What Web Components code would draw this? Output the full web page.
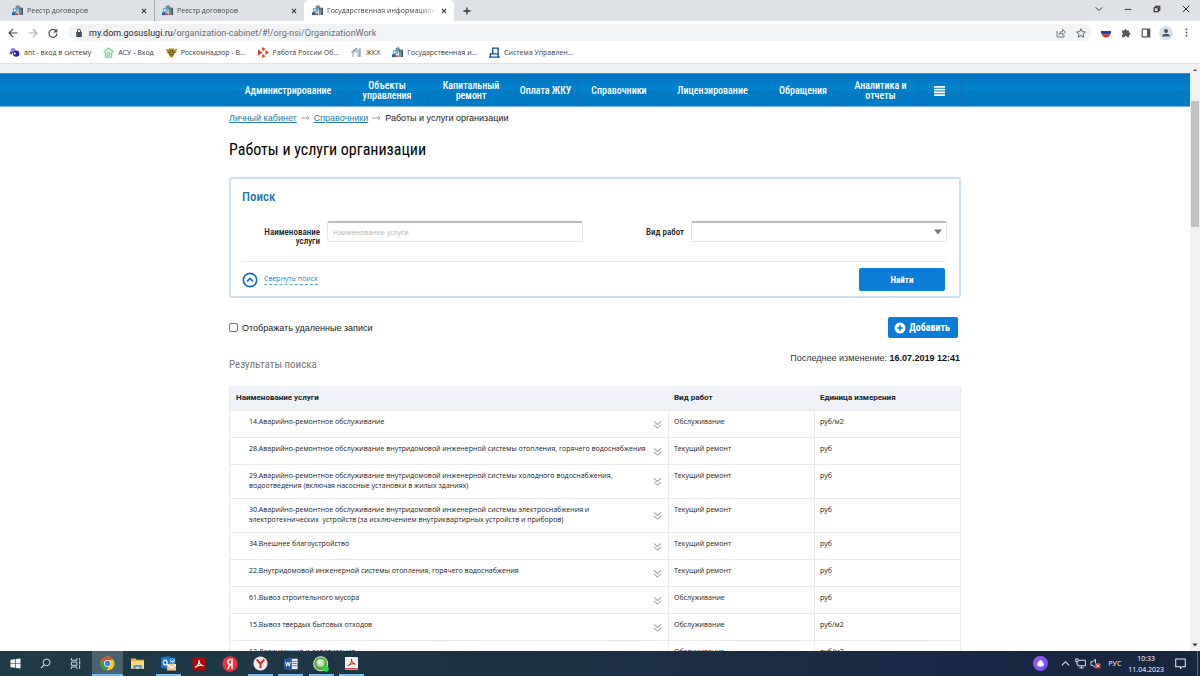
<!DOCTYPE html>
<html lang="ru">
<head>
<meta charset="utf-8">
<meta name="viewport" content="width=device-width, initial-scale=1">
<title>Государственная информационная система</title>
<style>
  html, body { margin: 0; height: 100%; }
  body {
    --ui: "Open Sans", "Noto Sans", sans-serif;
    --body: "Liberation Sans", Arial, sans-serif;
    --small: Roboto, "Liberation Sans", sans-serif;
    --cond: "Roboto Condensed", "Liberation Sans Narrow", Roboto, sans-serif;
    font-family: var(--body);
    color: #222;
  }
</style>
</head>
<body>
<desktop-screen>
  <tab-strip slot="chrome">
    <browser-tab>Реестр договоров</browser-tab>
    <browser-tab divided>Реестр договоров</browser-tab>
    <browser-tab active>Государственная информационная система</browser-tab>
  </tab-strip>
  <address-bar slot="chrome" host="my.dom.gosuslugi.ru" path="/organization-cabinet/#!/org-nsi/OrganizationWork"></address-bar>
  <bookmark-bar slot="chrome">
    <bookmark-link icon="ant">ant - вход в систему</bookmark-link>
    <bookmark-link icon="greenhome">АСУ - Вход</bookmark-link>
    <bookmark-link icon="eagle">Роскомнадзор - В...</bookmark-link>
    <bookmark-link icon="work">Работа России Об...</bookmark-link>
    <bookmark-link icon="house">ЖКХ</bookmark-link>
    <bookmark-link icon="gis">Государственная и...</bookmark-link>
    <bookmark-link icon="system">Система Управлен...</bookmark-link>
  </bookmark-bar>
  <page-view>
    <site-nav></site-nav>
    <page-body>
      <bread-crumbs></bread-crumbs>
      <page-title>Работы и услуги организации</page-title>
      <search-panel></search-panel>
      <list-tools></list-tools>
      <results-table></results-table>
    </page-body>
  </page-view>
  <task-bar slot="taskbar"></task-bar>
</desktop-screen>

<script>
const ICONS = {
  gis: ['0 0 12 12', '<path fill="#7b8a96" d="M4 1l4-1v3h3v8H9V5H4z"/><path fill="#39505f" d="M8 2h1v9H8zM10.500 3H12v8h-1.500z"/><path fill="#5aa9d6" d="M1 3.500h6v4.500H1z"/><path fill="#fff" d="M2 5h2v1.500H2zM5 6h1v1H5z"/><path fill="#1f5f9c" d="M0 8h4v3H0z"/><path fill="#d5442b" d="M4 9h3v2H4z"/>'],
  close: ['0 0 10 10', '<path stroke="#333" stroke-width="1.800" fill="none" d="M1.500 1.500l7 7M8.500 1.500l-7 7"/>'],
  plus: ['0 0 10 10', '<path stroke="#333" stroke-width="1.700" fill="none" d="M5 0.500v9M0.500 5h9"/>'],
  chevdown: ['0 0 10 10', '<path stroke="#333" stroke-width="1.200" fill="none" d="M1 3l4 4 4-4"/>'],
  minimize: ['0 0 10 10', '<path stroke="#333" stroke-width="1.200" d="M1 5.500h8"/>'],
  restore: ['0 0 10 10', '<path stroke="#222" stroke-width="1.400" fill="none" d="M1.500 3.500h5v5h-5zM3.500 3V1.500h5v5H7"/>'],
  winclose: ['0 0 10 10', '<path stroke="#222" stroke-width="1.200" fill="none" d="M1 1l8 8M9 1l-8 8"/>'],
  back: ['0 0 10 10', '<path stroke="#4a4d51" stroke-width="1.100" fill="none" d="M9.500 5H1M5 1L1 5l4 4"/>'],
  forward: ['0 0 10 10', '<path stroke="#b0b3b7" stroke-width="1.100" fill="none" d="M0.500 5H9M5 1l4 4-4 4"/>'],
  reload: ['0 0 10 10', '<path stroke="#4a4d51" stroke-width="1.200" fill="none" d="M8.300 3A4 4 0 1 0 9 5.600"/><path fill="#4a4d51" d="M9.300 0.500v4h-4z"/>'],
  lock: ['0 0 8 10', '<path fill="#4a4d51" d="M1.200 4h5.600v5H1.200z"/><path stroke="#4a4d51" fill="none" d="M2.500 4V2.700a1.500 1.500 0 0 1 3 0V4"/>'],
  share: ['0 0 10 10', '<path stroke="#6b6e72" stroke-width=".9" fill="none" d="M1 3v6h7V7M3 6.500c.3-2 1.500-3 3.500-3V1.500L9.500 4.200 6.500 7V5.200C5 5.200 4 5.500 3 6.500z"/>'],
  star: ['0 0 10 10', '<path stroke="#55585c" stroke-width=".9" fill="none" d="M5 .8l1.300 2.900 3.100.3-2.300 2.100.7 3.100L5 7.600 2.200 9.200l.7-3.100L.6 4l3.100-.3z"/>'],
  flag: ['0 0 10 10', '<path fill="#f4f6f8" d="M0 2h10v1H0z"/><path fill="#1b3fb8" d="M0 3h10c.1 1.300-.1 2.300-.6 3.200H.6C.1 5.300-.1 4.300 0 3z"/><path fill="#d0312b" d="M.6 6.200h8.800C8.500 8.300 6.800 9.400 5 9.400S1.500 8.300.6 6.200z"/>'],
  puzzle: ['0 0 10 10', '<path fill="#55585c" d="M1 2.500h2.300a1.300 1.300 0 1 1 2.600 0H8v2.100a1.300 1.300 0 1 1 0 2.600V9.300H6a1.200 1.200 0 0 0-2.500 0H1V7a1.300 1.300 0 0 0 0-2.500z"/>'],
  panel: ['0 0 10 10', '<path stroke="#55585c" stroke-width="1.200" fill="none" d="M1.200 1.200h7.600v7.600H1.200z"/><path fill="#55585c" d="M6 1h3v8H6z"/>'],
  person: ['0 0 14 14', '<circle cx="7" cy="7" r="7" fill="#dcdfe6"/><circle cx="7" cy="5" r="2" fill="#47566f"/><path fill="#47566f" d="M3 10.500C3 8.500 5 7.800 7 7.800s4 .7 4 2.700z"/>'],
  dots: ['0 0 10 10', '<g fill="#55585c"><circle cx="5" cy="1.500" r="1"/><circle cx="5" cy="5" r="1"/><circle cx="5" cy="8.500" r="1"/></g>'],
  ant: ['0 0 12 12', '<circle cx="4.500" cy="4" r="2.800" fill="#8f86e8"/><circle cx="7.800" cy="7.200" r="3.500" fill="#2a1fa0"/><circle cx="6.300" cy="7.200" r="1.100" fill="#fff"/><circle cx="2.300" cy="6.500" r="1.600" fill="#5448c8"/>'],
  greenhome: ['0 0 12 12', '<path fill="#d8f2e4" stroke="#86cfa9" stroke-width="1.200" d="M1 5l5-4 5 4-1.500 1V11h-7V6z"/><path stroke="#86cfa9" fill="none" d="M4.500 9V6.500h3V9z"/>'],
  eagle: ['0 0 12 12', '<path fill="#b98f1d" d="M0 2l3 1 1-2 2 1 2-1 1 2 3-1-1 4-2 1.500L8 10l-2 2-2-2-1-2.500L1 6z"/><path fill="#4a3a10" d="M1 4l2 1M4.500 3h1v2h-1zM6.500 3h1v2h-1zM4 8h4v1H4zM3 5l2 1v1L2 6zM9 5L7 6v1l3-1z"/>'],
  work: ['0 0 12 12', '<g fill="#e1452b"><path d="M4 0l4.500 2L5 4.500zM4 12l4.500-2L5 7.500zM0 2.500L4.800 6 0 9.500zM12 6L8 3.200v5.600z"/></g>'],
  house: ['0 0 12 12', '<path fill="#b9c9d6" d="M1 5l5-4 4 3v7H1z"/><path fill="#fff" d="M3 6h4v5H3z"/><path fill="#8ba3b5" d="M0 5.500L6 .5l1 1-6 5zM9 1h1.500v10H9z"/>'],
  system: ['0 0 12 12', '<path stroke="#17508a" stroke-width="1.500" fill="none" d="M0 11h12M4 8V1.200h6V11M1.500 11V7.500H10"/>'],
  burger: ['0 0 12 12', '<path fill="#fff" d="M0 1h12v2H0zM0 4h12v2H0zM0 7h12v2H0zM0 10h12v2H0z"/>'],
  arrow: ['0 0 9 6', '<path stroke="#999" stroke-width=".9" fill="none" d="M0 3h8M6 1.200L8 3 6 4.800"/>'],
  collapse: ['0 0 16 16', '<circle cx="8" cy="8" r="6.700" fill="none" stroke="#0f6fc4" stroke-width="1.700"/><path stroke="#0f6fc4" stroke-width="1.700" fill="none" d="M5 9.300l3-2.800 3 2.800"/>'],
  add: ['0 0 12 12', '<circle cx="6" cy="6" r="5.500" fill="#fff"/><path stroke="#0b7cd8" stroke-width="1.700" d="M6 3.200v5.600M3.200 6h5.600"/>'],
  expand: ['0 0 10 10', '<path stroke="#a3a7aa" stroke-width="1.200" fill="none" d="M1 1.500L5 5l4-3.500M1 5.500L5 9l4-3.500"/>'],
  caret: ['0 0 8 6', '<path fill="#777" d="M0 .5h8L4 5.500z"/>'],
  sbup: ['0 0 6 6', '<path fill="#444" d="M1 4h4L3 2z"/>'],
  sbdown: ['0 0 6 6', '<path fill="#333" d="M.5 1.500h5L3 4.500z"/>'],
  windows: ['0 0 12 12', '<path fill="#f2f5f6" d="M.5 2L5.500 1.300v4.300h-5zM6.200 1.200l5.300-.7v5.100H6.200zM.5 6.300h5v4.400l-5-.7zM6.200 6.300h5.300v5.200l-5.300-.7z"/>'],
  search: ['0 0 12 12', '<circle cx="7.200" cy="4.800" r="3.700" fill="none" stroke="#e8eef0"/><path stroke="#e8eef0" stroke-width="1.100" d="M4.500 7.500L1 11.200"/>'],
  taskview: ['0 0 12 12', '<path stroke="#dce4e6" fill="none" d="M1.500 0v2.500h6V0M1.500 4.500h6v3.500h-6zM1.500 12V9.800h6V12M10.500 0v3M10.500 7v5"/><path fill="#fff" d="M9.800 4h1.500v2H9.800z"/>'],
  chrome: ['0 0 16 16', '<circle cx="8" cy="8" r="7.500" fill="#f3c41c"/><path fill="#dd4b3a" d="M1.500 4.200A7.500 7.500 0 0 1 14.500 4.300H8L5 9.700z"/><path fill="#2f9e4f" d="M1.500 4.200L5 9.900l5-.2-2.800 5.800A7.500 7.500 0 0 1 1.500 4.200z"/><circle cx="8" cy="8" r="3.700" fill="#fff"/><circle cx="8" cy="8" r="2.900" fill="#3d7de0"/>'],
  folder: ['0 0 14 14', '<path fill="#e9b33a" d="M0 1.500h5l1 1.500h8v10H0z"/><path fill="#fbdc83" d="M0 4.500h14V12H0z"/><path fill="#4aa0dc" d="M2.500 8.500h9V13H9v-2.300H5V13H2.500z"/>'],
  outlook: ['0 0 16 16', '<path fill="#1378cf" d="M0 1.500L9 0v14l-9-1.500z"/><path fill="#3b9ae6" d="M9 2h6v7H9z"/><ellipse cx="4.500" cy="7" rx="2" ry="2.600" fill="none" stroke="#fff" stroke-width="1.300"/><path stroke="#fff" fill="none" d="M9.500 4.500L12 6.500 15 4.500"/><path fill="#f3c88c" d="M6.500 8.500H16v7H6.500z"/><path stroke="#fff" stroke-width="1.200" fill="none" d="M6.500 9l4.800 3.500L16 9"/>'],
  acrobat: ['0 0 14 14', '<rect x=".5" y=".5" width="13" height="13" rx="2" fill="#b30b0b"/><path stroke="#fff" stroke-width="1.100" fill="none" d="M3 10.500c3-1.500 4.300-4 4-7.500C7 6.500 9 8.500 11.500 8.700 9 8 5.500 8.500 3 10.500z"/>'],
  yandex: ['0 0 16 16', '<circle cx="8" cy="8" r="7.700" fill="#ee3038"/><path stroke="#fff" stroke-width="1.500" fill="none" d="M10 13V3.500H8.300C5 3.500 5 8.300 8.300 8.300H10M8.300 8.300L5.500 13"/>'],
  ybrowser: ['0 0 16 16', '<circle cx="8" cy="8" r="7.500" fill="#f3eeee"/><path stroke="#dc2b2b" stroke-width="2.100" fill="none" d="M4 3.500l4 5 4-5M8 8v5"/>'],
  word: ['0 0 16 16', '<path fill="#eef2f8" d="M8 2h7.500v12H8z"/><path stroke="#3661ad" d="M9.500 5h5M9.500 7.500h5M9.500 10h5"/><path fill="#2a5699" d="M0 2l9-1.500v15L0 14z"/><path stroke="#fff" stroke-width="1.100" fill="none" d="M1.800 5.500L3 10.500 4.500 6 6 10.500l1.300-5"/>'],
  green: ['0 0 16 16', '<circle cx="7.700" cy="7.700" r="7.500" fill="#d7e9cf"/><circle cx="7.700" cy="7.700" r="6.500" fill="#55a83c"/><circle cx="7.500" cy="7" r="4" fill="#b4e0a2"/><circle cx="7" cy="6" r="2.200" fill="#eaf8e4"/><circle cx="13" cy="13" r="2.800" fill="#27d944"/>'],
  pdf: ['0 0 14 14', '<path fill="#f5f4f4" d="M0 0h14v14H0z"/><path fill="#e4e1e1" d="M10 0h4v4z"/><path stroke="#d63232" stroke-width="1.100" fill="none" d="M3 9.500c3-1.500 4.300-4 4-7.500C7 5.500 9 7.500 11.500 7.700 9 7 5.500 7.500 3 9.500z"/><path fill="#d63232" d="M0 12h14v1.500H0z"/>'],
  alice: ['0 0 16 16', '<defs><linearGradient id="g" x2="1" y2="1"><stop stop-color="#a55cf5"/><stop offset="1" stop-color="#6a4df0"/></linearGradient></defs><circle cx="8" cy="8" r="8" fill="url(#g)"/><path fill="#fff" d="M8 4.200c1.600 0 3.800 4.200 3.600 5.500-.2 1.200-1.400 1.700-3.600 1.700s-3.400-.5-3.600-1.700C4.200 8.400 6.400 4.200 8 4.200z"/>'],
  up: ['0 0 10 10', '<path stroke="#e8ebf1" stroke-width="1.200" fill="none" d="M1 7l4-4 4 4"/>'],
  network: ['0 0 12 12', '<path stroke="#e8ebf1" fill="none" d="M4 2.500h7.500v6H3V6M7 8.500v2M4.500 10.800h5M.8 1h2.600v3H.8zM2 4v3"/>'],
  sound: ['0 0 12 12', '<path stroke="#e8ebf1" fill="none" d="M1 4h2l3-2.500v9L3 8H1z"/><rect x="5.500" y="5.500" width="6" height="6" rx="1" fill="#dd2f3d"/><path stroke="#fff" d="M7 7l3 3M10 7l-3 3"/>'],
  note: ['0 0 12 12', '<path stroke="#e8ebf1" stroke-width="1.100" fill="none" d="M.8 1h10.400v8.500H8L6 11.500V9.500H.8z"/>']
};

/* Small helper: a base class that fills its shadow root from template(). */
class Base extends HTMLElement {
  constructor() { super(); this.attachShadow({ mode: 'open' }); }
  connectedCallback() {
    const t = document.createElement('template');
    t.innerHTML = '<style>:host,*{box-sizing:border-box}button{font:inherit;border:0;padding:0;background:none;color:inherit}</style>' + this.template();
    this.shadowRoot.replaceChildren(t.content.cloneNode(true));
  }
}
const define = (name, template) => customElements.define(name, class extends Base {
  template() { return template(this); }
});
const icon = (name, w = 10, h = w) => `<ui-icon name="${name}" w="${w}" h="${h}"></ui-icon>`;
const iconButton = (name, label, w, h) => `<button type="button" aria-label="${label}">${icon(name, w, h)}</button>`;

define('ui-icon', el => {
  const [box, body] = ICONS[el.getAttribute('name')];
  return `<style>:host{display:block;flex:none}svg{display:block}</style>
    <svg width="${el.getAttribute('w')}" height="${el.getAttribute('h')}" viewBox="${box}" aria-hidden="true">${body}</svg>`;
});

define('desktop-screen', () => `
  <style>
    :host{display:flex;flex-direction:column;height:100vh;overflow:hidden;background:#fff}
    main{flex:1;min-height:0;display:flex}
  </style>
  <slot name="chrome"></slot><main><slot></slot></main><slot name="taskbar"></slot>`);

define('tab-strip', () => `
  <style>
    :host{display:flex;flex:none;height:21px;padding-left:4px;background:#dee1e6;align-items:stretch}
    .new{width:26px;display:grid;place-items:center}
    .window{margin-left:auto;display:flex}
    .window button{width:29px;display:grid;place-items:center;padding-bottom:4px}
  </style>
  <slot></slot>
  <button class="new" type="button" aria-label="Новая вкладка">${icon('plus', 8)}</button>
  <div class="window">${iconButton('chevdown', 'Поиск вкладок', 8)}${iconButton('minimize', 'Свернуть', 8)}${iconButton('restore', 'Восстановить', 8)}${iconButton('winclose', 'Закрыть', 8)}</div>`);

define('browser-tab', () => `
  <style>
    :host{display:flex;width:150px;align-items:center;gap:4px;padding:0 7px 0 8px;font:7px/12px var(--ui);color:#45494d}
    :host([divided]){box-shadow:inset 1px 0 #a5a9af}
    :host([active]){background:#fff;border-radius:5px 5px 0 0}
    span{flex:1;min-width:0;overflow:hidden;white-space:nowrap;mask-image:linear-gradient(90deg,#000 85%,transparent)}
  </style>
  ${icon('gis', 11)}<span><slot></slot></span>${iconButton('close', 'Закрыть вкладку', 6)}`);

define('address-bar', el => `
  <style>
    :host{display:flex;flex:none;height:23px;align-items:center;background:#fff;padding:0 4px 0 3px;font:9px/12px var(--small)}
    button{width:20px;display:grid;place-items:center}
    .omni{flex:1;display:flex;align-items:center;height:17px;border-radius:9px;background:#f1f3f4;margin:0 4px 0 5px;padding:0 1px 0 7px}
    p{flex:1;margin:0 0 0 6px;color:#6a6e73;white-space:nowrap}
    b{font-weight:400;color:#26282b}
  </style>
  ${iconButton('back', 'Назад', 10)}${iconButton('forward', 'Вперёд', 10)}${iconButton('reload', 'Обновить', 10)}
  <div class="omni">${icon('lock', 8, 10)}<p><b>${el.getAttribute('host')}</b>${el.getAttribute('path')}</p>
  ${iconButton('share', 'Поделиться', 10)}${iconButton('star', 'В закладки', 10)}</div>
  ${iconButton('flag', 'Госуслуги', 10)}${iconButton('puzzle', 'Расширения', 10)}${iconButton('panel', 'Боковая панель', 10)}${iconButton('person', 'Профиль', 14)}${iconButton('dots', 'Меню', 9)}`);

define('bookmark-bar', () => `
  <style>:host{display:flex;flex:none;height:20px;gap:12px;padding:0 9px 2px;align-items:center;border-bottom:1px solid #dfe4e5;background:#fff}</style>
  <slot></slot>`);

define('bookmark-link', el => `
  <style>:host{display:block}a{display:flex;align-items:center;gap:4px;font:7px/12px var(--ui);color:#3c4043;text-decoration:none;white-space:nowrap}</style>
  <a href="#">${icon(el.getAttribute('icon'), 11)}<slot></slot></a>`);

define('page-view', () => `
  <style>
    :host{display:flex;flex:1;min-width:0}
    .doc{flex:1;min-width:0;overflow:hidden;background:#fff}
    .bar{flex:none;width:10px;background:#f1f1f1;display:flex;flex-direction:column;align-items:center;padding:3px 0}
    .space{flex:28}
    .thumb{flex:126;width:8px;background:#c1c1c1}
    .rest{flex:416}
  </style>
  <div class="doc"><slot></slot></div>
  <div class="bar">${icon('sbup', 6)}<div class="space"></div><div class="thumb"></div><div class="rest"></div>${icon('sbdown', 6)}</div>`);

define('site-nav', () => `
  <style>
    :host{display:block;border-top:9px solid #ebf0f2}
    nav{background:linear-gradient(#0071bd,#0084d0 45%,#007bc4 55%,#007dc8);border-top:1px solid #3c93c8;border-bottom:1px solid #7ab8dd;display:flex;justify-content:center}
    .in{width:732px;height:32px;display:grid;grid-template-columns:117fr 81fr 87fr 62fr 85fr 102fr 79fr 76fr 42fr;border-right:1px solid #0b74b8}
    .in>*{display:grid;place-items:center;align-content:center;text-align:center;padding-top:1px;border-left:1px solid #0b74b8;color:#fff;font:500 10px/10px var(--cond);text-decoration:none}
  </style>
  <nav><div class="in">
    <a href="#">Администрирование</a><a href="#">Объекты<br>управления</a><a href="#">Капитальный<br>ремонт</a><a href="#">Оплата ЖКУ</a><a href="#">Справочники</a><a href="#">Лицензирование</a><a href="#">Обращения</a><a href="#">Аналитика и<br>отчеты</a>
    <button type="button" aria-label="Ещё">${icon('burger', 11)}</button>
  </div></nav>`);

define('page-body', () => `
  <style>:host{display:block;max-width:732px;margin:0 auto}</style><slot></slot>`);

define('bread-crumbs', () => `
  <style>
    :host{display:block;padding-top:5px}
    nav{display:flex;align-items:center;gap:4px;font-size:9px;line-height:12px;color:#222}
    a{color:#2b7cab;text-decoration:underline}
  </style>
  <nav aria-label="Навигация"><a href="#">Личный кабинет</a>${icon('arrow', 9, 6)}<a href="#">Справочники</a>${icon('arrow', 9, 6)}<span>Работы и услуги организации</span></nav>`);

define('page-title', () => `
  <style>:host{display:block}h1{margin:16px 0 17px;font:400 16px/20px var(--cond);color:#000}</style>
  <h1><slot></slot></h1>`);

define('search-panel', () => `
  <style>
    :host{display:block;border:2px solid #cbe2f4;border-radius:3px;padding:10px 12px 5px 11px;background:#fff}
    h2{margin:0 0 16px;font:500 13px/16px var(--cond);color:#1c76ae}
    .fields{display:grid;grid-template-columns:1fr 1fr;gap:23px;padding-bottom:15px;border-bottom:1px solid #e9ecee}
    .field{display:grid;grid-template-columns:78px 1fr;gap:7px;align-items:start;min-height:25px}
    label{padding-top:7px;font:500 9px/9px var(--cond);text-align:right;color:#222}
    input,select{width:100%;height:21px;border:1px solid #e4e6e8;border-top:2px solid #bcbcbc;border-radius:2px;background:#fff;padding:0 5px;font:7px/12px var(--ui);color:#222;appearance:none}
    input::placeholder{color:#b0b4b8}
    .pick{display:grid;align-items:center}
    .pick>*{grid-area:1/1}
    .pick ui-icon{justify-self:end;margin-right:5px;pointer-events:none}
    .foot{display:flex;justify-content:space-between;align-items:center;padding:6px 2px 0 0}
    .fold{display:flex;align-items:center;gap:6px;font:7px/10px var(--ui);color:#2b7fc3}
    .fold span{border-bottom:1px dashed #5ba3d6}
    .find{width:86px;height:23px;border-radius:2px;background:#0b7cd8;color:#fff;font:bold 9px/12px var(--cond)}
  </style>
  <form>
    <h2>Поиск</h2>
    <div class="fields">
      <div class="field"><label for="name">Наименование<br>услуги</label><input id="name" placeholder="Наименование услуги"></div>
      <div class="field"><label for="kind">Вид работ</label><div class="pick"><select id="kind"><option></option></select>${icon('caret', 8, 6)}</div></div>
    </div>
    <div class="foot">
      <button type="button" class="fold">${icon('collapse', 16)}<span>Свернуть поиск</span></button>
      <button type="button" class="find">Найти</button>
    </div>
  </form>`);

define('list-tools', () => `
  <style>
    :host{display:block}
    .row{display:flex;justify-content:space-between}
    .first{margin-top:19px;padding-right:3px;align-items:center}
    label{display:flex;align-items:center;gap:4px;font-size:9px;line-height:12px}
    input{appearance:none;width:9px;height:9px;margin:0;border:1px solid #777;border-radius:2px;background:#fff}
    .add{display:flex;align-items:center;gap:3px;height:21px;padding:0 8px 0 6px;border-radius:2px;background:#0b7cd8;color:#fff;font:bold 10px/12px var(--cond)}
    .second{margin-top:12px;height:36px}
    h2{margin:7px 0 0;font:400 11px/16px var(--cond);color:#777}
    p{margin:0;padding-right:1px;font-size:9px;line-height:16px;color:#333}
    b{color:#111}
  </style>
  <div class="row first">
    <label><input type="checkbox">Отображать удаленные записи</label>
    <button type="button" class="add">${icon('add', 12)}Добавить</button>
  </div>
  <div class="row second"><h2>Результаты поиска</h2><p>Последнее изменение: <b>16.07.2019 12:41</b></p></div>`);

const WORKS = [
  ['14.Аварийно-ремонтное обслуживание', 'Обслуживание', 'руб/м2'],
  ['28.Аварийно-ремонтное обслуживание внутридомовой инженерной системы отопления, горячего водоснабжения', 'Текущий ремонт', 'руб'],
  ['29.Аварийно-ремонтное обслуживание внутридомовой инженерной системы холодного водоснабжения, водоотведения (включая насосные установки в жилых зданиях)', 'Текущий ремонт', 'руб'],
  ['30.Аварийно-ремонтное обслуживание внутридомовой инженерной системы электроснабжения и электротехнических&nbsp; устройств (за исключением внутриквартирных устройств и приборов)', 'Текущий ремонт', 'руб'],
  ['34.Внешнее благоустройство', 'Текущий ремонт', 'руб'],
  ['22.Внутридомовой инженерной системы отопления, горячего водоснабжения', 'Текущий ремонт', 'руб'],
  ['61.Вывоз строительного мусора', 'Обслуживание', 'руб'],
  ['15.Вывоз твердых бытовых отходов', 'Обслуживание', 'руб/м2'],
  ['13.Дезинсекция и дератизация', 'Обслуживание', 'руб/м2']
];

define('results-table', () => `
  <style>
    :host{display:block}
    table{width:100%;border-collapse:separate;border-spacing:0;table-layout:fixed;font:7px/10px var(--ui);color:#222;border:solid #e9ecef;border-width:0 1px 0 1px}
    th{height:25px;padding:0 6px;background:#eff3f7;border-bottom:1px solid #e9ecef;text-align:left;font:bold 8px/10px var(--small);color:#222}
    td{height:27px;padding:6px 6px 7px 5px;border-bottom:1px solid #e9ecef;vertical-align:top}
    td+td{border-left:1px solid #e9ecef}
    td:first-child{padding:0}
    .cell{display:grid;grid-template-columns:1fr 10px;gap:2px;min-height:26px;padding:0 5px 0 19px;align-items:center}
    .cell span{align-self:start;padding:6px 0 7px}
    .w{width:60%}
  </style>
  <table>
    <thead><tr><th class="w">Наименование услуги</th><th>Вид работ</th><th>Единица измерения</th></tr></thead>
    <tbody>${WORKS.map(([a, b, c]) => `<tr><td><div class="cell"><span>${a}</span>${iconButton('expand', 'Развернуть', 9)}</div></td><td>${b}</td><td>${c}</td></tr>`).join('')}</tbody>
  </table>`);

define('task-bar', () => `
  <style>
    :host{display:flex;flex:none;height:25px;background:linear-gradient(90deg,#203b47,#1d3444 35%,#1a2845 80%,#18253f);color:#fff;font:7px/11px var(--ui)}
    button{display:grid;place-items:center}
    .sys,.apps,.tray{display:flex}
    .sys button{width:30px}
    .apps{width:275px;margin-left:2px}
    .apps button{flex:1}
    .run{background:linear-gradient(#76b9ed,#76b9ed) center bottom/25px 2px no-repeat}
    .on{background:linear-gradient(#76b9ed,#76b9ed) center bottom/100% 2px no-repeat #4a626d}
    .tray{margin-left:auto;align-items:center;padding-right:7px;border-right:1px solid #5d6a84;margin-right:2px}
    .alice{margin-right:10px}
    .tray .ic{width:15px}
    .lang{margin-left:5px}
    time{margin:0 6px 0 7px;text-align:center}
    .bell{width:20px}
  </style>
  <div class="sys">${iconButton('windows', 'Пуск', 11)}${iconButton('search', 'Поиск', 11)}${iconButton('taskview', 'Представление задач', 11)}</div>
  <div class="apps">${[['chrome', 'on', 15], ['folder', '', 13], ['outlook', 'run', 15], ['acrobat', '', 14], ['yandex', '', 16], ['ybrowser', 'run', 15], ['word', 'run', 14], ['green', 'run', 16], ['pdf', 'run', 13]].map(([n, c, s]) => `<button type="button" class="${c}" aria-label="${n}">${icon(n, s)}</button>`).join('')}</div>
  <div class="tray">
    <button type="button" class="alice" aria-label="Алиса">${icon('alice', 15)}</button>
    <button type="button" class="ic" aria-label="Скрытые значки">${icon('up', 9)}</button>
    <button type="button" class="ic" aria-label="Сеть">${icon('network', 11)}</button>
    <button type="button" class="ic" aria-label="Звук">${icon('sound', 11)}</button>
    <span class="lang">РУС</span>
    <time datetime="2023-04-11T10:33">10:33<br>11.04.2023</time>
    <button type="button" class="bell" aria-label="Уведомления">${icon('note', 11)}</button>
  </div>`);
</script>
</body>
</html>
